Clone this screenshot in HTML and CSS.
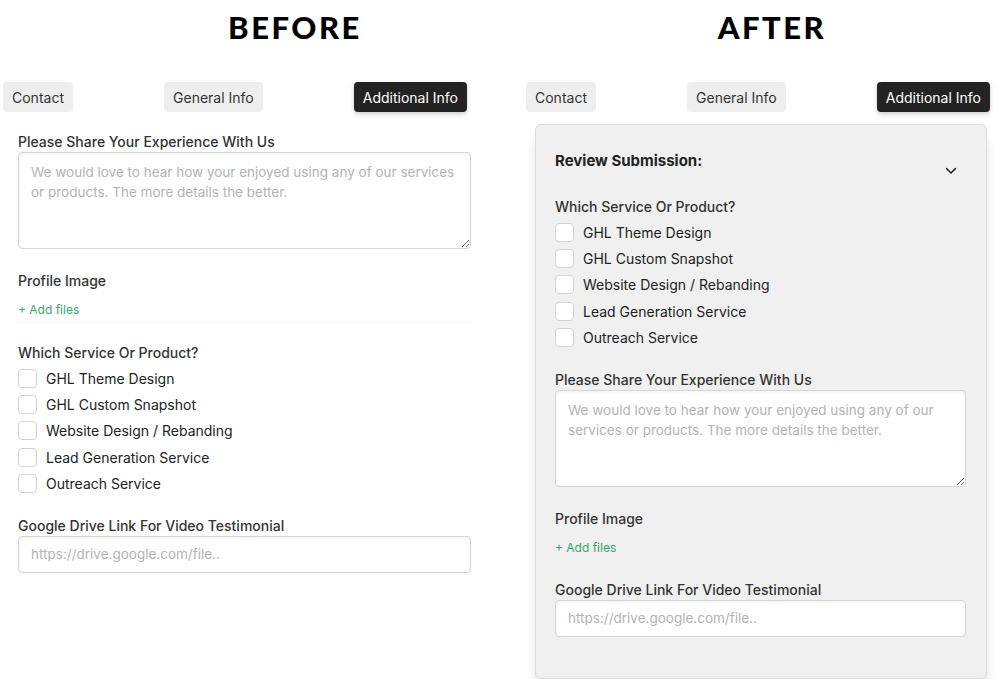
FILE: index.html
```html
<!DOCTYPE html>
<html lang="en">
<head>
  <meta charset="UTF-8" />
  <meta name="viewport" content="width=device-width, initial-scale=1.0"/>
  <title>Review Form | Before / After</title>
  <link rel="stylesheet" href="styles.css">
</head>
<body>
  <div class="compare">

    <div class="side before">
      <h1 class="side-title">BEFORE</h1>
      <div class="tabs">
        <button class="tab">Contact</button>
        <button class="tab">General Info</button>
        <button class="tab active">Additional Info</button>
      </div>

      <div class="form-body">
        <div class="field">
          <label class="field-label">Please Share Your Experience With Us</label>
          <textarea class="text-area" placeholder="We would love to hear how your enjoyed using any of our services or products. The more details the better."></textarea>
        </div>

        <div class="field field-upload">
          <label class="field-label">Profile Image</label>
          <a class="add-files" href="#">+ Add files</a>
        </div>

        <div class="field field-checks">
          <label class="field-label">Which Service Or Product?</label>
          <div class="check-list">
            <label class="check-row"><input type="checkbox"> GHL Theme Design</label>
            <label class="check-row"><input type="checkbox"> GHL Custom Snapshot</label>
            <label class="check-row"><input type="checkbox"> Website Design / Rebanding</label>
            <label class="check-row"><input type="checkbox"> Lead Generation Service</label>
            <label class="check-row"><input type="checkbox"> Outreach Service</label>
          </div>
        </div>

        <div class="field">
          <label class="field-label">Google Drive Link For Video Testimonial</label>
          <input class="text-input" type="text" placeholder="https://drive.google.com/file..">
        </div>
      </div>
    </div>

    <div class="side after">
      <h1 class="side-title">AFTER</h1>
      <div class="tabs">
        <button class="tab">Contact</button>
        <button class="tab">General Info</button>
        <button class="tab active">Additional Info</button>
      </div>

      <div class="card">
        <div class="card-header">
          <h3 class="card-title">Review Submission:</h3>
          <svg class="chevron" width="12" height="8" viewBox="0 0 12 8">
            <path d="M1.5 1.5 L6 6 L10.5 1.5" fill="none" stroke="#222" stroke-width="1.6" stroke-linecap="round" stroke-linejoin="round"/>
          </svg>
        </div>

        <div class="field field-checks">
          <label class="field-label">Which Service Or Product?</label>
          <div class="check-list">
            <label class="check-row"><input type="checkbox"> GHL Theme Design</label>
            <label class="check-row"><input type="checkbox"> GHL Custom Snapshot</label>
            <label class="check-row"><input type="checkbox"> Website Design / Rebanding</label>
            <label class="check-row"><input type="checkbox"> Lead Generation Service</label>
            <label class="check-row"><input type="checkbox"> Outreach Service</label>
          </div>
        </div>

        <div class="field">
          <label class="field-label">Please Share Your Experience With Us</label>
          <textarea class="text-area" placeholder="We would love to hear how your enjoyed using any of our services or products. The more details the better."></textarea>
        </div>

        <div class="field field-files">
          <label class="field-label">Profile Image</label>
          <a class="add-files" href="#">+ Add files</a>
        </div>

        <div class="field">
          <label class="field-label">Google Drive Link For Video Testimonial</label>
          <input class="text-input" type="text" placeholder="https://drive.google.com/file..">
        </div>
      </div>
    </div>

  </div>
</body>
</html>
```

FILE: styles.css
```css
body {
  margin: 0;
  background-color: #ffffff;
  color: #333333;
  font-family: 'Inter', 'Noto Sans', sans-serif;
}

.compare {
  display: flex;
  gap: 44px;
}

.side {
  width: 478px;
  display: flex;
  flex-direction: column;
}

.side-title {
  margin: 0;
  height: 55px;
  line-height: 54px;
  text-align: center;
  font-family: 'Lato', 'Noto Sans', sans-serif;
  font-weight: 900;
  font-size: 31px;
  letter-spacing: 2.5px;
  color: #000000;
}

.before .side-title {
  padding-left: 112px;
}

.after .side-title {
  padding-left: 22px;
}

.tabs {
  display: flex;
  justify-content: space-between;
  margin-top: 27px;
  padding: 0 11px 0 3px;
}

.after .tabs {
  padding: 0 10px 0 4px;
}

.tab {
  height: 30px;
  padding: 0 9px;
  font-family: 'Inter', sans-serif;
  font-size: 14px;
  color: #333333;
  background-color: #eeeeee;
  border: none;
  border-radius: 4px;
  cursor: pointer;
}

.tab.active {
  background-color: #232323;
  color: #ffffff;
  box-shadow: 0 2px 5px rgba(0,0,0,0.2);
}

.form-body {
  padding: 20px 7px 0 18px;
}

.field {
  display: flex;
  flex-direction: column;
  margin-bottom: 22px;
}

.field-label {
  font-size: 14px;
  line-height: 20px;
  font-weight: 500;
  color: #333333;
}

.text-area {
  height: 97px;
  box-sizing: border-box;
  padding: 9px 12px;
  font-family: 'Inter', sans-serif;
  font-size: 13.5px;
  line-height: 20px;
  background-color: #ffffff;
  border: 1px solid #d6d6d6;
  border-radius: 4px;
  box-shadow: inset 0 1px 4px rgba(0,0,0,0.06);
  resize: vertical;
}

.text-input {
  height: 37px;
  box-sizing: border-box;
  padding: 0 12px;
  font-family: 'Inter', sans-serif;
  font-size: 13.5px;
  background-color: #ffffff;
  border: 1px solid #d6d6d6;
  border-radius: 4px;
  box-shadow: inset 0 1px 4px rgba(0,0,0,0.06);
}

.text-area::placeholder,
.text-input::placeholder {
  color: #b3b3b3;
}

.add-files {
  margin-top: 11px;
  font-size: 12px;
  line-height: 16px;
  color: #3aa66a;
  text-decoration: none;
}

.field-upload {
  padding-bottom: 4px;
  border-bottom: 1px solid #f7f7f7;
  margin-bottom: 20px;
}

.field-checks {
  margin-bottom: 19px;
}

.field-files {
  margin-bottom: 24px;
}

.check-list {
  display: flex;
  flex-direction: column;
  margin-top: 2px;
}

.check-row {
  display: flex;
  align-items: center;
  gap: 9px;
  height: 26.4px;
  font-size: 14px;
  color: #222222;
}

.check-row input {
  appearance: none;
  margin: 0;
  width: 19px;
  height: 19px;
  background-color: #ffffff;
  border: 1px solid #d3d3d3;
  border-radius: 4px;
}

.card {
  margin: 12px 13px 0 13px;
  padding: 26px 20px 19px 19px;
  background-color: #f0f0f0;
  border: 1px solid #dcdcdc;
  border-radius: 6px;
  box-shadow: 0 12px 14px -4px rgba(0,0,0,0.22);
}

.card-header {
  display: flex;
  justify-content: space-between;
  align-items: flex-start;
  margin-bottom: 22px;
  padding-right: 9px;
}

.card-title {
  margin: 0;
  font-size: 15px;
  line-height: 20px;
  font-weight: 700;
  color: #222222;
}

.chevron {
  margin-top: 16px;
}
```
